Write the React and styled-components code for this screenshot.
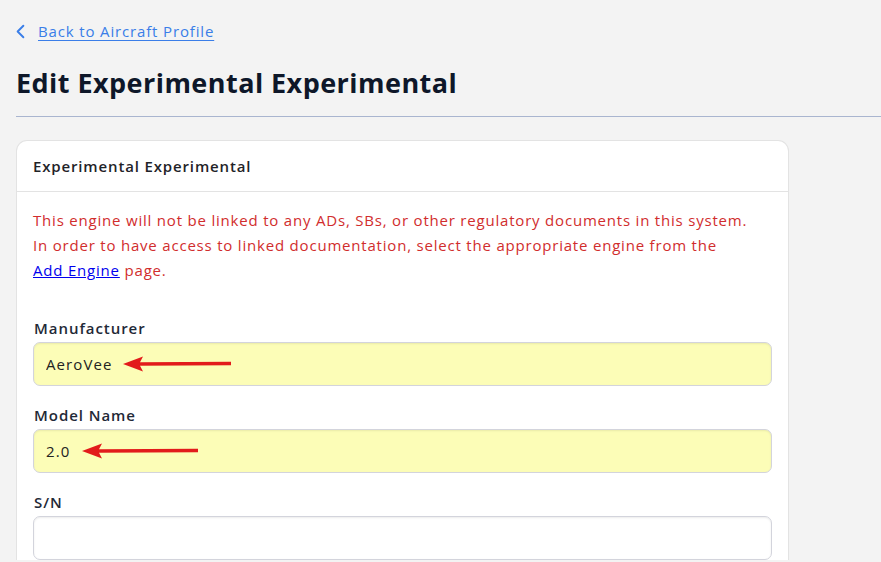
import React from 'react'
import styled, { createGlobalStyle } from 'styled-components'
import { ChevronLeft } from 'lucide-react'

const Global = createGlobalStyle`
  html, body {
    margin: 0;
    padding: 0;
    background: #f3f3f3;
  }
  body {
    font-family: "Open Sans", "Noto Sans", Arial, sans-serif;
    color: #1f2937;
  }
  * { box-sizing: border-box; }
`

// page wrapper
const Page = styled.div`
  padding: 19px 0 0 16px;
  min-height: 562px;
  overflow: hidden;
`

const BackLink = styled.a`
  display: flex;
  align-items: center;
  gap: 6px;
  color: #3a7ee8;
  font-size: 15px;
  letter-spacing: 0.85px;
  text-decoration: underline;
  text-underline-offset: 3px;
  cursor: pointer;
  height: 24px;
  margin-left: -7px;
`

const Title = styled.h1`
  margin: 22px 0 0;
  font-size: 27px;
  font-weight: 700;
  color: #0e1729;
  letter-spacing: 0.45px;
  line-height: 36px;
`

const Rule = styled.hr`
  border: none;
  border-top: 1px solid #a9b5cf;
  margin: 15px 0 0;
`

const Card = styled.section`
  margin-top: 23px;
  width: 773px;
  background: #fff;
  border: 1px solid #e3e3e3;
  border-radius: 11px 11px 0 0;
  border-bottom: none;
`

const CardHeader = styled.div`
  height: 51px;
  display: flex;
  align-items: center;
  padding: 0 16px;
  font-size: 15px;
  font-weight: 600;
  letter-spacing: 0.85px;
  color: #1f2328;
  border-bottom: 1px solid #e3e3e3;
`

const CardBody = styled.div`
  padding: 16px 16px 0;
`

const Warning = styled.p`
  margin: 0;
  color: #d12d2d;
  font-size: 15px;
  line-height: 25px;
  letter-spacing: 0.8px;
`

const Link = styled.a`
  color: #0000ee;
  text-decoration: underline;
  cursor: pointer;
`

const Form = styled.div`
  margin-top: 35px;
  display: flex;
  flex-direction: column;
  gap: 19px;
`

const Field = styled.div`
  display: flex;
  flex-direction: column;
  gap: 4px;
`

const Label = styled.label`
  font-size: 15px;
  font-weight: 600;
  letter-spacing: 0.95px;
  color: #1f2937;
  padding-left: 1px;
  line-height: 20px;
`

const InputWrap = styled.div`
  position: relative;
  width: 739px;
`

const Input = styled.input`
  width: 100%;
  height: 44px;
  border: 1px solid #d3d4dc;
  border-radius: 7px;
  background: ${({ filled }) => (filled ? '#fcfdb7' : '#fff')};
  box-shadow: inset 0 1px 2px rgba(0, 0, 0, 0.08);
  padding: 0 12px;
  font-family: inherit;
  font-size: 15px;
  letter-spacing: 1.1px;
  color: #222;
  outline: none;
`

// red annotation arrow drawn over the input
const Arrow = styled.svg`
  position: absolute;
  top: 14px;
  left: ${({ left }) => left}px;
  pointer-events: none;
`

const RedArrow = ({ left, length }) => (
  <Arrow left={left} width={length} height={16} viewBox={`0 0 ${length} 16`}>
    <polygon points="0,8 20,0.5 17,6.3 17,9.7 20,15.5" fill="#e21b1b" />
    <line x1="16" y1="8" x2={length} y2="7.5" stroke="#e21b1b" strokeWidth="3.4" />
  </Arrow>
)

export default function App() {
  return (
    <Page>
      <Global />
      <BackLink>
        <ChevronLeft size={23} strokeWidth={2} />
        Back to Aircraft Profile
      </BackLink>
      <Title>Edit Experimental Experimental</Title>
      <Rule />
      <Card>
        <CardHeader>Experimental Experimental</CardHeader>
        <CardBody>
          <Warning>
            This engine will not be linked to any ADs, SBs, or other regulatory documents in this system.
            <br />
            In order to have access to linked documentation, select the appropriate engine from the
            <br />
            <Link>Add Engine</Link> page.
          </Warning>
          <Form>
            <Field>
              <Label>Manufacturer</Label>
              <InputWrap>
                <Input filled defaultValue="AeroVee" />
                <RedArrow left={90} length={108} />
              </InputWrap>
            </Field>
            <Field>
              <Label>Model Name</Label>
              <InputWrap>
                <Input filled defaultValue="2.0" />
                <RedArrow left={49} length={116} />
              </InputWrap>
            </Field>
            <Field>
              <Label>S/N</Label>
              <InputWrap>
                <Input defaultValue="" />
              </InputWrap>
            </Field>
          </Form>
        </CardBody>
      </Card>
    </Page>
  )
}
